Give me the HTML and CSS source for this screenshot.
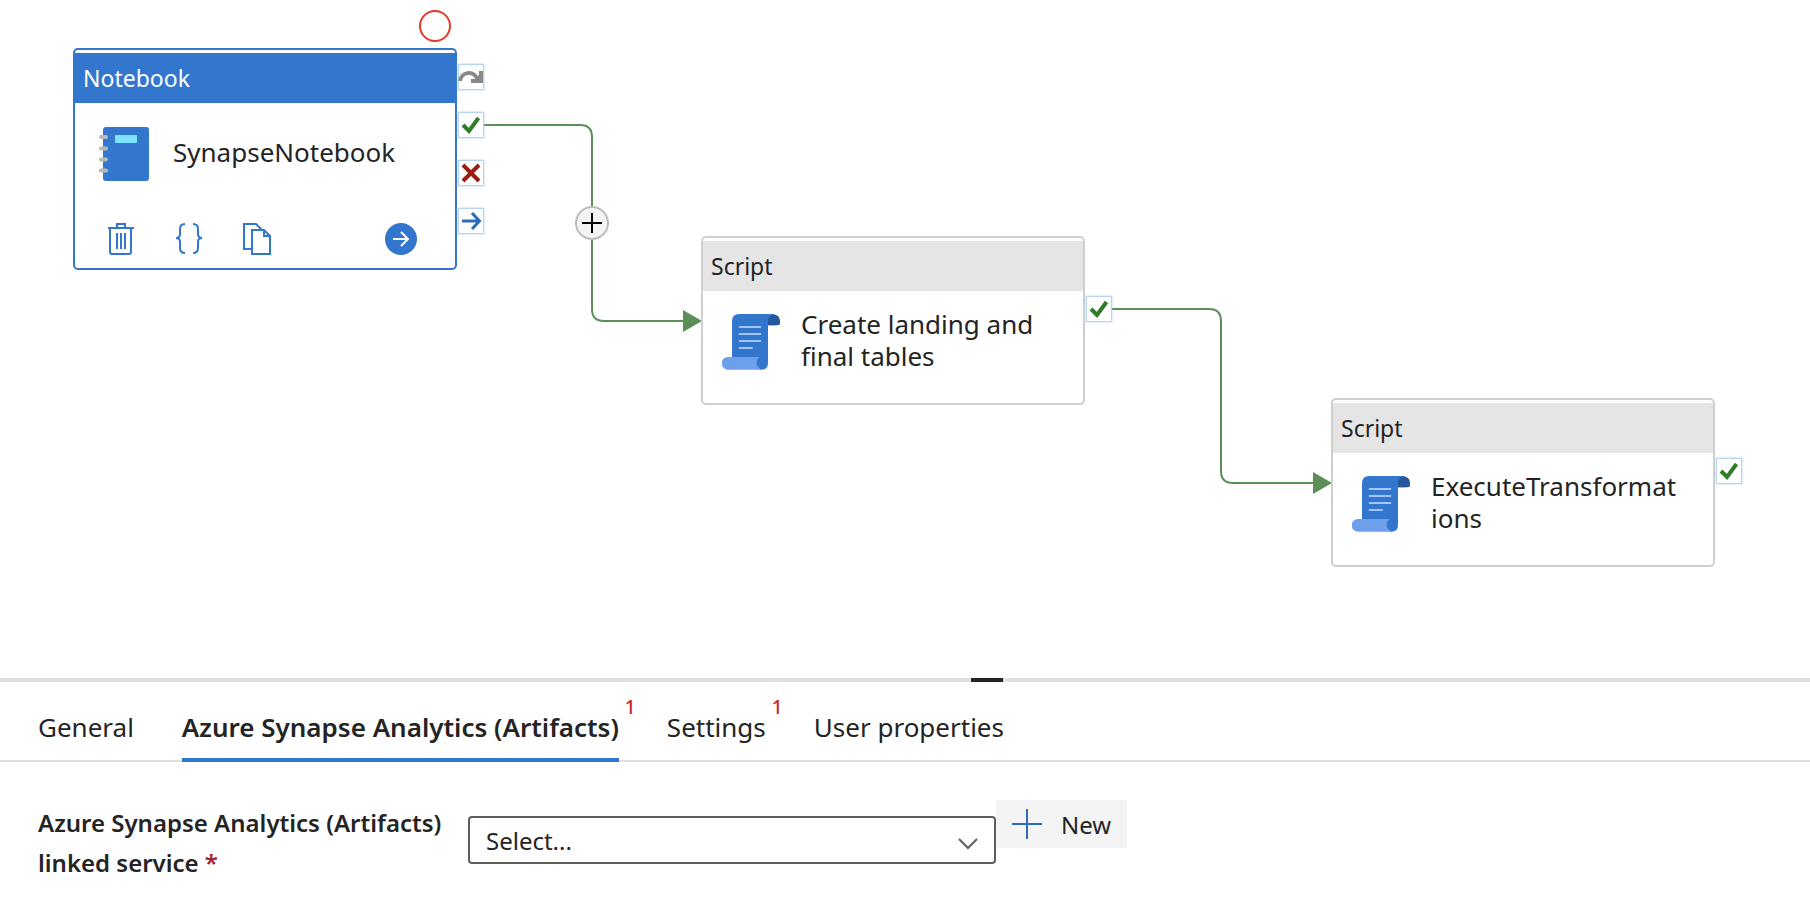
FILE: index.html
```html
<!DOCTYPE html>
<html lang="en">
<head>
<meta charset="utf-8">
<title>Pipeline editor</title>
<link rel="stylesheet" href="styles.css">
</head>
<body>
<svg class="sprite" aria-hidden="true">
  <symbol id="check" viewBox="0 0 26 26"><path d="M5 13 L11 19 L20.500 6" fill="none" stroke="#317c28" stroke-width="4"/></symbol>
  <symbol id="script" viewBox="0 0 174 168">
    <path d="M52 0 H158 V34 H138 V146 Q138 167 118 167 L30 150 V22 Q30 0 52 0Z" fill="#3376cd"/>
    <path d="M138 34 V20 A17 17 0 0 1 155 2 C168 2 174 10 174 22 V28 Q174 34 168 34Z" fill="#25589c"/>
    <path d="M18 129 H112 Q104 136 104 147 Q104 160 120 167 H18 A19 19 0 0 1 18 129Z" fill="#6d9feb"/>
    <path d="M53 39H115M53 60H115M53 81H115M53 102H90" stroke="#a3c5fa" stroke-width="6" stroke-linecap="round"/>
  </symbol>
</svg>
<main class="app">
  <section class="canvas" aria-label="Pipeline canvas">
    <svg class="wires" aria-hidden="true">
      <g fill="none" stroke="#5b8f57" stroke-width="2">
        <path d="M484 125 H580 Q592 125 592 137 V309 Q592 321 604 321 H690"/>
        <path d="M1110 309 H1209 Q1221 309 1221 321 V471 Q1221 483 1233 483 H1320"/>
      </g>
      <path d="M683 310 L702 321 L683 332Z M1313 472 L1332 483 L1313 494Z" fill="#5b8f57"/>
      <circle cx="435" cy="26" r="15" fill="none" stroke="#e8372b" stroke-width="2"/>
    </svg>

    <button class="insert" aria-label="Insert activity"><svg width="20" height="20"><path d="M10 0V20M0 10H20" stroke="#000" stroke-width="2"/></svg></button>

    <article class="node node-notebook">
      <header class="node-head">Notebook</header>
      <div class="node-body">
        <svg class="node-icon" width="52" height="54" viewBox="0 0 52 54">
          <rect x="5" width="46" height="54" rx="3" fill="#3376cd"/>
          <rect x="17" y="8" width="22" height="8" rx="1" fill="#7de3ff"/>
          <path d="M3 10H8M3 21.500H8M3 32.500H8M3 43.500H8" stroke="#b8b8b8" stroke-width="4" stroke-linecap="round"/>
        </svg>
        <span class="node-name">SynapseNotebook</span>
      </div>
      <footer class="node-tools">
        <button class="tool" aria-label="Delete"><svg width="28" height="32" viewBox="0 0 28 32" fill="none" stroke="#3376cd" stroke-width="2"><path d="M1 5H27M10 5V1H18V5M3 5V29Q3 31 5 31H22Q24 31 24 29V5M10 10V26M14 10V26M18 10V26"/></svg></button>
        <button class="tool" aria-label="View source"><svg width="28" height="32" viewBox="0 0 28 32" fill="none" stroke="#3376cd" stroke-width="2"><path d="M10 1Q5 1 5 6V11Q5 15 1 15Q5 15 5 19V25Q5 30 10 30M18 1Q23 1 23 6V11Q23 15 27 15Q23 15 23 19V25Q23 30 18 30"/></svg></button>
        <button class="tool" aria-label="Clone"><svg width="28" height="32" viewBox="0 0 28 32" fill="none" stroke="#3376cd" stroke-width="2"><path d="M9 26H1V1H13L19 7M9 7H21L27 13V31H9ZM21 7V13H27"/></svg></button>
        <button class="tool tool-run" aria-label="Open"><svg width="32" height="32"><circle cx="16" cy="16" r="16" fill="#3376cd"/><path d="M8 16H23M16 9L23 16L16 23" fill="none" stroke="#fff" stroke-width="2"/></svg></button>
      </footer>
      <div class="ports">
        <button class="port" aria-label="On skip"><svg width="26" height="26"><path d="M2 17A9 9 0 0 1 19 14" fill="none" stroke="#8a8886" stroke-width="4"/><path d="M25 7V19H13V15H17L21 11V7Z" fill="#8a8886"/></svg></button>
        <button class="port" aria-label="On success"><svg width="26" height="26"><use href="#check"/></svg></button>
        <button class="port" aria-label="On failure"><svg width="26" height="26"><path d="M5 5L21 21M21 5L5 21" stroke="#9b1c13" stroke-width="4"/></svg></button>
        <button class="port" aria-label="On completion"><svg width="26" height="26"><path d="M4 13H21M14 5L21.500 13L14 21" fill="none" stroke="#2f6bbd" stroke-width="3"/></svg></button>
      </div>
    </article>

    <article class="node node-create">
      <header class="node-head">Script</header>
      <div class="node-body">
        <svg class="node-icon" width="58" height="56"><use href="#script"/></svg>
        <span class="node-name">Create landing and final tables</span>
      </div>
      <div class="ports"><button class="port" aria-label="On success"><svg width="26" height="26"><use href="#check"/></svg></button></div>
    </article>

    <article class="node node-execute">
      <header class="node-head">Script</header>
      <div class="node-body">
        <svg class="node-icon" width="58" height="56"><use href="#script"/></svg>
        <span class="node-name">ExecuteTransformations</span>
      </div>
      <div class="ports"><button class="port" aria-label="On success"><svg width="26" height="26"><use href="#check"/></svg></button></div>
    </article>
  </section>

  <section class="panel" aria-label="Activity properties">
    <div class="splitter"><div class="grip"></div></div>
    <nav class="tabs" role="tablist">
      <button class="tab" role="tab">General</button>
      <button class="tab tab-active" role="tab" aria-selected="true">Azure Synapse Analytics (Artifacts)<span class="badge">1</span></button>
      <button class="tab" role="tab">Settings<span class="badge">1</span></button>
      <button class="tab" role="tab">User properties</button>
    </nav>
    <form class="form">
      <label class="label" for="service">Azure Synapse Analytics (Artifacts) linked service <span class="required">*</span></label>
      <div class="picker">
        <select class="select" id="service"><option>Select...</option></select>
        <svg class="chevron" width="20" height="12" aria-hidden="true"><path d="M1 1L10 10L19 1" fill="none" stroke="#605e5c" stroke-width="2"/></svg>
      </div>
      <button class="new" type="button"><svg width="30" height="30" aria-hidden="true"><path d="M15 0V30M0 15H30" stroke="#2f6bbd" stroke-width="2"/></svg>New</button>
    </form>
  </section>
</main>
</body>
</html>
```
FILE: styles.css
```css
* { box-sizing: border-box; }
body {
  margin: 0;
  background: #fff;
  color: #242424;
  font-family: "Noto Sans", "Open Sans", sans-serif;
  font-size: 26px;
}
button, select {
  font: inherit;
  color: inherit;
  background: none;
  border: 0;
  padding: 0;
  margin: 0;
}
svg { display: block; flex: none; }
.sprite { position: absolute; width: 0; height: 0; }
.app { display: flex; flex-direction: column; min-height: 100vh; }

.canvas { position: relative; flex: 1; min-height: 600px; overflow: hidden; }
.wires { position: absolute; inset: 0; width: 100%; height: 100%; }
.insert {
  position: absolute;
  left: 575px;
  top: 206px;
  width: 34px;
  height: 34px;
  display: grid;
  place-items: center;
  border: 2px solid #bdbdbd;
  border-radius: 50%;
  background: #f4f4f4;
}

.node {
  position: absolute;
  width: 384px;
  padding-top: 3px;
  border: 2px solid #cfcfcf;
  border-radius: 5px;
  background: #fff;
}
.node-notebook { left: 73px; top: 48px; border-color: #3376cd; }
.node-create { left: 701px; top: 236px; }
.node-execute { left: 1331px; top: 398px; }
.node-head {
  height: 50px;
  padding: 0 8px;
  background: #e5e5e5;
  font-size: 23px;
  line-height: 50px;
}
.node-notebook .node-head { background: #3376cd; color: #fff; }
.node-body { display: flex; gap: 21px; height: 112px; padding: 17px 36px 0 19px; }
.node-notebook .node-body { gap: 23px; padding: 24px 30px 0 23px; }
.node-icon { margin-top: 6px; }
.node-notebook .node-icon { margin-top: 0; }
.node-name { min-width: 0; line-height: 32px; overflow-wrap: anywhere; }
.node-notebook .node-name { line-height: 50px; }
.node-tools { display: flex; gap: 40px; height: 53px; padding: 8px 38px 0 32px; }
.tool-run { margin-left: auto; }
.tool { display: flex; align-items: flex-start; }
.ports {
  position: absolute;
  left: 383px;
  top: 58px;
  display: grid;
  gap: 22px;
}
.node-notebook .ports { top: 14px; }
.port {
  width: 26px;
  height: 26px;
  background: #fff;
  box-shadow: inset 0 0 0 1px #b9d3f3, 0 0 2px #a9c9f1;
}

.splitter { height: 4px; background: #e0e0e0; }
.grip { width: 32px; height: 4px; margin-left: calc(50% + 66px); background: #242424; }
.tabs {
  display: flex;
  gap: 48px;
  height: 80px;
  padding: 0 38px;
  border-bottom: 2px solid #e0e0e0;
}
.tab { position: relative; height: 80px; padding-top: 14px; border-bottom: 4px solid transparent; white-space: nowrap; }
.tab-active { border-bottom-color: #3376cd; font-weight: 600; }
.badge {
  position: absolute;
  left: calc(100% + 6px);
  top: 12px;
  color: #c4262c;
  font-size: 19px;
  font-weight: 500;
  line-height: 26px;
}
.form { display: flex; align-items: flex-start; padding: 38px 38px 39px; }
.label { width: 430px; font-size: 24px; font-weight: 600; line-height: 40px; padding-top: 3px; padding-right: 16px; }
.required { color: #a4262c; }
.picker { position: relative; width: 528px; margin-top: 16px; }
.select {
  appearance: none;
  display: block;
  width: 100%;
  height: 48px;
  padding: 0 48px 0 16px;
  border: 2px solid #605e5c;
  border-radius: 4px;
  background: #fff;
  font-size: 24px;
}
.chevron { position: absolute; right: 18px; top: 22px; pointer-events: none; }
.new { display: flex; align-items: center; gap: 19px; height: 48px; padding: 0 16px; background: #f4f4f4; font-size: 24px; }
```
